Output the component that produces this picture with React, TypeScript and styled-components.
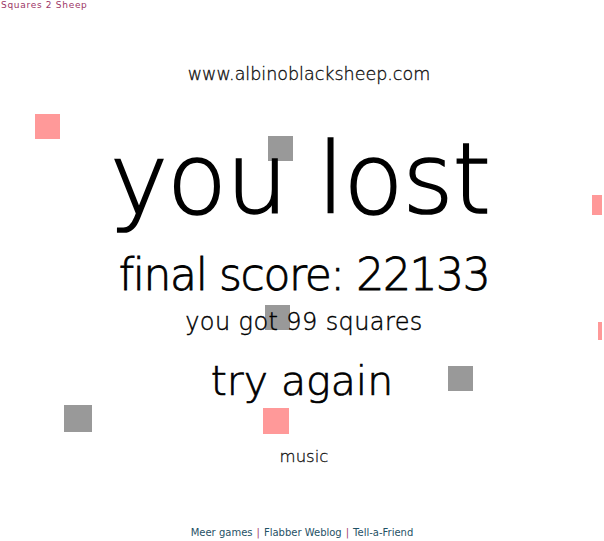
import styled, { createGlobalStyle } from 'styled-components';

const GlobalStyle = createGlobalStyle`
  html, body {
    margin: 0;
    padding: 0;
    background: #ffffff;
  }
`;

const SQUARES = [
  { x: 35, y: 114, w: 25, h: 25, color: '#ff9999' },
  { x: 268, y: 136, w: 25, h: 25, color: '#999999' },
  { x: 592, y: 195, w: 10, h: 20, color: '#ff9999' },
  { x: 265, y: 305, w: 25, h: 25, color: '#999999' },
  { x: 598, y: 322, w: 4, h: 18, color: '#ff9999' },
  { x: 448, y: 366, w: 25, h: 25, color: '#999999' },
  { x: 64, y: 405, w: 28, h: 27, color: '#999999' },
  { x: 263, y: 408, w: 26, h: 26, color: '#ff9999' },
];

export default function App() {
  return (
    <>
      <GlobalStyle />
      <Stage>
        {SQUARES.map((sq, i) => (
          <Square
            key={i}
            $color={sq.color}
            style={{ left: sq.x, top: sq.y, width: sq.w, height: sq.h }}
          />
        ))}
        <GameTitle>Squares 2 Sheep</GameTitle>
        <Board>
          <SiteUrl>www.albinoblacksheep.com</SiteUrl>
          <Headline>you lost</Headline>
          <Score>final score: 22133</Score>
          <SubLine>you got 99 squares</SubLine>
          <TryAgain>try again</TryAgain>
          <Music>music</Music>
        </Board>
        <Footer>
          <FooterLink>Meer games</FooterLink>
          <Sep>|</Sep>
          <FooterLink>Flabber Weblog</FooterLink>
          <Sep>|</Sep>
          <FooterLink>Tell-a-Friend</FooterLink>
        </Footer>
      </Stage>
    </>
  );
}

const Stage = styled.div`
  position: relative;
  width: 604px;
  height: 541px;
  overflow: hidden;
  background: #fff;
  display: flex;
  flex-direction: column;
`;

const Square = styled.div<{ $color: string }>`
  position: absolute;
  background: ${({ $color }) => $color};
  z-index: 0;
`;

const GameTitle = styled.div`
  position: absolute;
  top: 0;
  left: 1px;
  z-index: 1;
  font-family: 'DejaVu Sans', Verdana, sans-serif;
  font-size: 9px;
  letter-spacing: 0.7px;
  color: #9c3566;
  line-height: 11px;
`;

const Board = styled.div`
  position: relative;
  z-index: 1;
  display: flex;
  flex-direction: column;
  align-items: center;
  font-family: 'DejaVu Sans', sans-serif;
  font-weight: 200;
  font-variant-ligatures: none;
  color: #000;
  padding-top: 64px;
  flex: 1;
`;

const SiteUrl = styled.div`
  font-size: 17.5px;
  line-height: 20px;
  margin-left: 14px;
  color: #111;
  -webkit-text-stroke: 0.35px #111;
`;

const Headline = styled.div`
  font-size: 98px;
  line-height: 110px;
  margin-top: 40px;
  margin-left: -4px;
  letter-spacing: -1px;
  -webkit-text-stroke: 1.6px #000;
`;

const Score = styled.div`
  font-size: 44px;
  line-height: 50px;
  margin-top: 16px;
  margin-left: 4px;
  letter-spacing: -1.4px;
  -webkit-text-stroke: 0.8px #000;
`;

const SubLine = styled.div`
  font-size: 24px;
  line-height: 28px;
  margin-top: 8px;
  margin-left: 4px;
  letter-spacing: 0.4px;
  -webkit-text-stroke: 0.4px #000;
`;

const TryAgain = styled.div`
  font-size: 41px;
  line-height: 46px;
  margin-top: 22px;
  -webkit-text-stroke: 0.7px #000;
`;

const Music = styled.div`
  font-size: 16.5px;
  line-height: 18px;
  margin-top: 44px;
  margin-left: 4px;
  color: #111;
  -webkit-text-stroke: 0.3px #111;
`;

const Footer = styled.div`
  position: relative;
  z-index: 1;
  display: flex;
  justify-content: center;
  gap: 4px;
  padding-bottom: 1px;
  font-family: 'DejaVu Sans', Verdana, sans-serif;
  font-size: 10px;
  line-height: 14px;
`;

const FooterLink = styled.span`
  color: #1f5266;
`;

const Sep = styled.span`
  color: #a3406e;
`;
